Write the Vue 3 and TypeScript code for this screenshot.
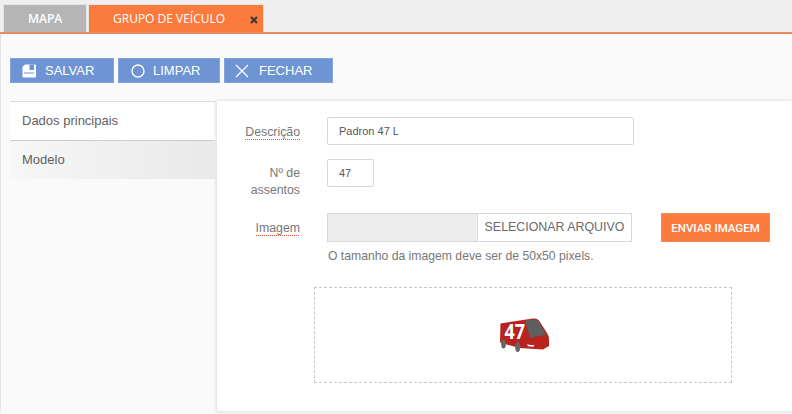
<script setup lang="ts">
const buttons = ['SALVAR', 'LIMPAR', 'FECHAR']
</script>

<template>
  <div class="page">
    <header class="tabs">
      <div class="tab gray">MAPA</div>
      <div class="tab orange">
        <span>GRUPO DE VEÍCULO</span>
        <svg class="close" width="8" height="8" viewBox="0 0 8 8"><path d="M1 1L7 7M7 1L1 7" stroke="#3a3a3a" stroke-width="2.2" /></svg>
      </div>
    </header>
    <main class="body">
      <div class="toolbar">
        <button v-for="b in buttons" :key="b" class="tool" :class="b.toLowerCase()">
          <svg v-if="b === 'SALVAR'" width="14" height="14" viewBox="0 0 14 14"><path fill="#fff" d="M3 .5H13Q14 .5 14 1.500V12.500Q14 13.500 13 13.500H1.500Q.5 13.500 .5 12.500V3Z"/><path fill="#6f94d3" d="M7.500 .5H12V6H7.500ZM2 8.500H12V9.500H2Z"/></svg>
          <svg v-else-if="b === 'LIMPAR'" width="14" height="14" viewBox="0 0 14 14"><circle cx="7" cy="7" r="6" fill="none" stroke="#fff" stroke-width="1.4"/></svg>
          <svg v-else width="14" height="14" viewBox="0 0 14 14"><path d="M1 1L13 13M13 1L1 13" stroke="#fff" stroke-width="1.2"/></svg>
          <span>{{ b }}</span>
        </button>
      </div>
      <div class="split">
        <nav class="side">
          <div class="side-item active">Dados principais</div>
          <div class="side-item">Modelo</div>
        </nav>
        <section class="content">
          <div class="row r1">
            <label class="lab"><span class="dot">Descrição</span></label>
            <div class="input wide">Padron 47 L</div>
          </div>
          <div class="row r2">
            <label class="lab">Nº de<br />assentos</label>
            <div class="input small">47</div>
          </div>
          <div class="row r3">
            <label class="lab"><span class="dot">Imagem</span></label>
            <div class="file">
              <div class="file-empty"></div>
              <div class="file-btn">SELECIONAR ARQUIVO</div>
            </div>
            <button class="send">ENVIAR IMAGEM</button>
          </div>
          <p class="hint">O tamanho da imagem deve ser de 50x50 pixels.</p>
          <div class="drop">
            <svg class="bus" width="53" height="38" viewBox="0 -1 53 38">
              <path fill="#b8231f" d="M3.500 6.500L36 1.500Q40 1 42 3.500L50 16Q52 19 52 22V29L46 32.500L22 31L3 25.500Z"/>
              <path fill="#5e5e5e" d="M28 3.500L38.500 2.500Q40.500 2.500 41.500 4L49.500 17.500L33 21Z"/>
              <ellipse cx="6.500" cy="27" rx="2.300" ry="4.500" fill="#666"/>
              <ellipse cx="20.700" cy="30" rx="2.500" ry="5" fill="#666"/>
              <path fill="#fff" d="M30 27.500L37.500 28.200L36.500 29.700L31 29.200Z"/>
              <text x="7.500" y="22" class="bus-num" textLength="20.500" lengthAdjust="spacingAndGlyphs">47</text>
            </svg>
          </div>
        </section>
      </div>
    </main>
  </div>
</template>

<style>
html, body { margin: 0; background: #fafafa; }
</style>

<style scoped>
.page { width: 792px; height: 414px; overflow: hidden; font-family: "Liberation Sans", Arial, sans-serif; color: #666; background: #fafafa; box-sizing: border-box; }
.tabs { height: 32px; background: #efefef; display: flex; padding-left: 3px; gap: 1px; border-bottom: 2px solid #ea8a5e; box-sizing: content-box; }
.tab { margin-top: 4px; height: 28px; display: flex; align-items: center; font-family: "Open Sans", sans-serif; font-size: 12px; font-weight: 600; color: #fff; border: 1px solid #e4e4e4; border-bottom: 0; box-sizing: border-box; }
.gray { width: 84px; background: #b5b5b5; padding-left: 24px; }
.orange { width: 176px; background: #fb7a3e; padding-left: 24px; position: relative; font-weight: 400; }
.close { position: absolute; left: 161px; top: 11px; }
.body { padding-top: 24px; border-left: 1px solid #e4e4e4; }
.toolbar { display: flex; gap: 4px; padding-left: 9px; }
.tool { height: 25px; background: #6f94d3; border: 1px solid #83a4db; color: #fff; display: flex; align-items: center; font-family: "Liberation Sans", sans-serif; font-size: 13px; padding: 0; }
.salvar { width: 104px; padding-left: 11px; gap: 9px; }
.limpar { width: 102px; padding-left: 12px; gap: 8px; }
.fechar { width: 109px; padding-left: 10px; gap: 10px; }
.split { display: flex; margin-top: 18px; margin-left: 9px; align-items: flex-start; }
.side { width: 207px; padding-top: 1px; border-top: 1px solid #ddd; flex: none; }
.side-item { height: 38px; padding: 0 12px; font-size: 13px; line-height: 38px; color: #5f5f5f; background: linear-gradient(90deg, #f7f7f7, #e9e9e9); box-sizing: border-box; }
.side-item.active { height: 38px; line-height: 36px; background: #fff; border-bottom: 1px solid #ccc; }
.content { flex: 1; height: 310px; background: #fff; box-shadow: -2px 0 2px #e8e8e8, 0 2px 2px #e8e8e8, 0 -1px 2px #e4e4e4; position: relative; box-sizing: border-box; padding-top: 16px; }
.row { display: flex; align-items: flex-start; }
.lab { width: 83px; text-align: right; font-size: 12.3px; line-height: 17px; color: #777; margin-right: 27px; flex: none; }
.dot { padding-bottom: 1px; background: repeating-linear-gradient(90deg, #ee4a3a 0 1px, transparent 1px 2px) left bottom / 100% 1px no-repeat; }
.r1 .lab { padding-top: 7px; }
.r2 { margin-top: 14px; }
.r2 .lab { padding-top: 6px; }
.r3 { margin-top: 14px; }
.r3 .lab { padding-top: 7px; }
.input { height: 28px; border: 1px solid #d8d8d8; border-radius: 2px; box-sizing: border-box; font-size: 11px; line-height: 26px; padding-left: 11px; color: #555; background: #fff; }
.wide { width: 307px; }
.small { width: 47px; }
.file { display: flex; width: 305px; height: 29px; border: 1px solid #d8d8d8; box-sizing: border-box; margin-top: 0; }
.file-empty { width: 149px; background: #ededed; flex: none; }
.file-btn { flex: 1; border-left: 1px solid #ddd; font-size: 12.4px; line-height: 27px; text-align: center; color: #6b6b6b; white-space: nowrap; }
.send { margin-left: 29px; width: 109px; height: 29px; padding: 0; background: #fb7a3e; color: #fff; border: 1px solid #f58a58; font-family: "Roboto", sans-serif; font-size: 11.5px; font-weight: 500; }
.hint { margin: 6px 0 0 111px; font-size: 12.2px; line-height: 17px; color: #777; }
.drop { margin: 22px 0 0 97px; width: 418px; height: 96px; border: 1px dashed #c8c8c8; box-sizing: border-box; display: flex; align-items: center; justify-content: center; }
.bus-num { font-family: "Open Sans", sans-serif; font-size: 22px; font-weight: 700; fill: #fff; }
</style>
